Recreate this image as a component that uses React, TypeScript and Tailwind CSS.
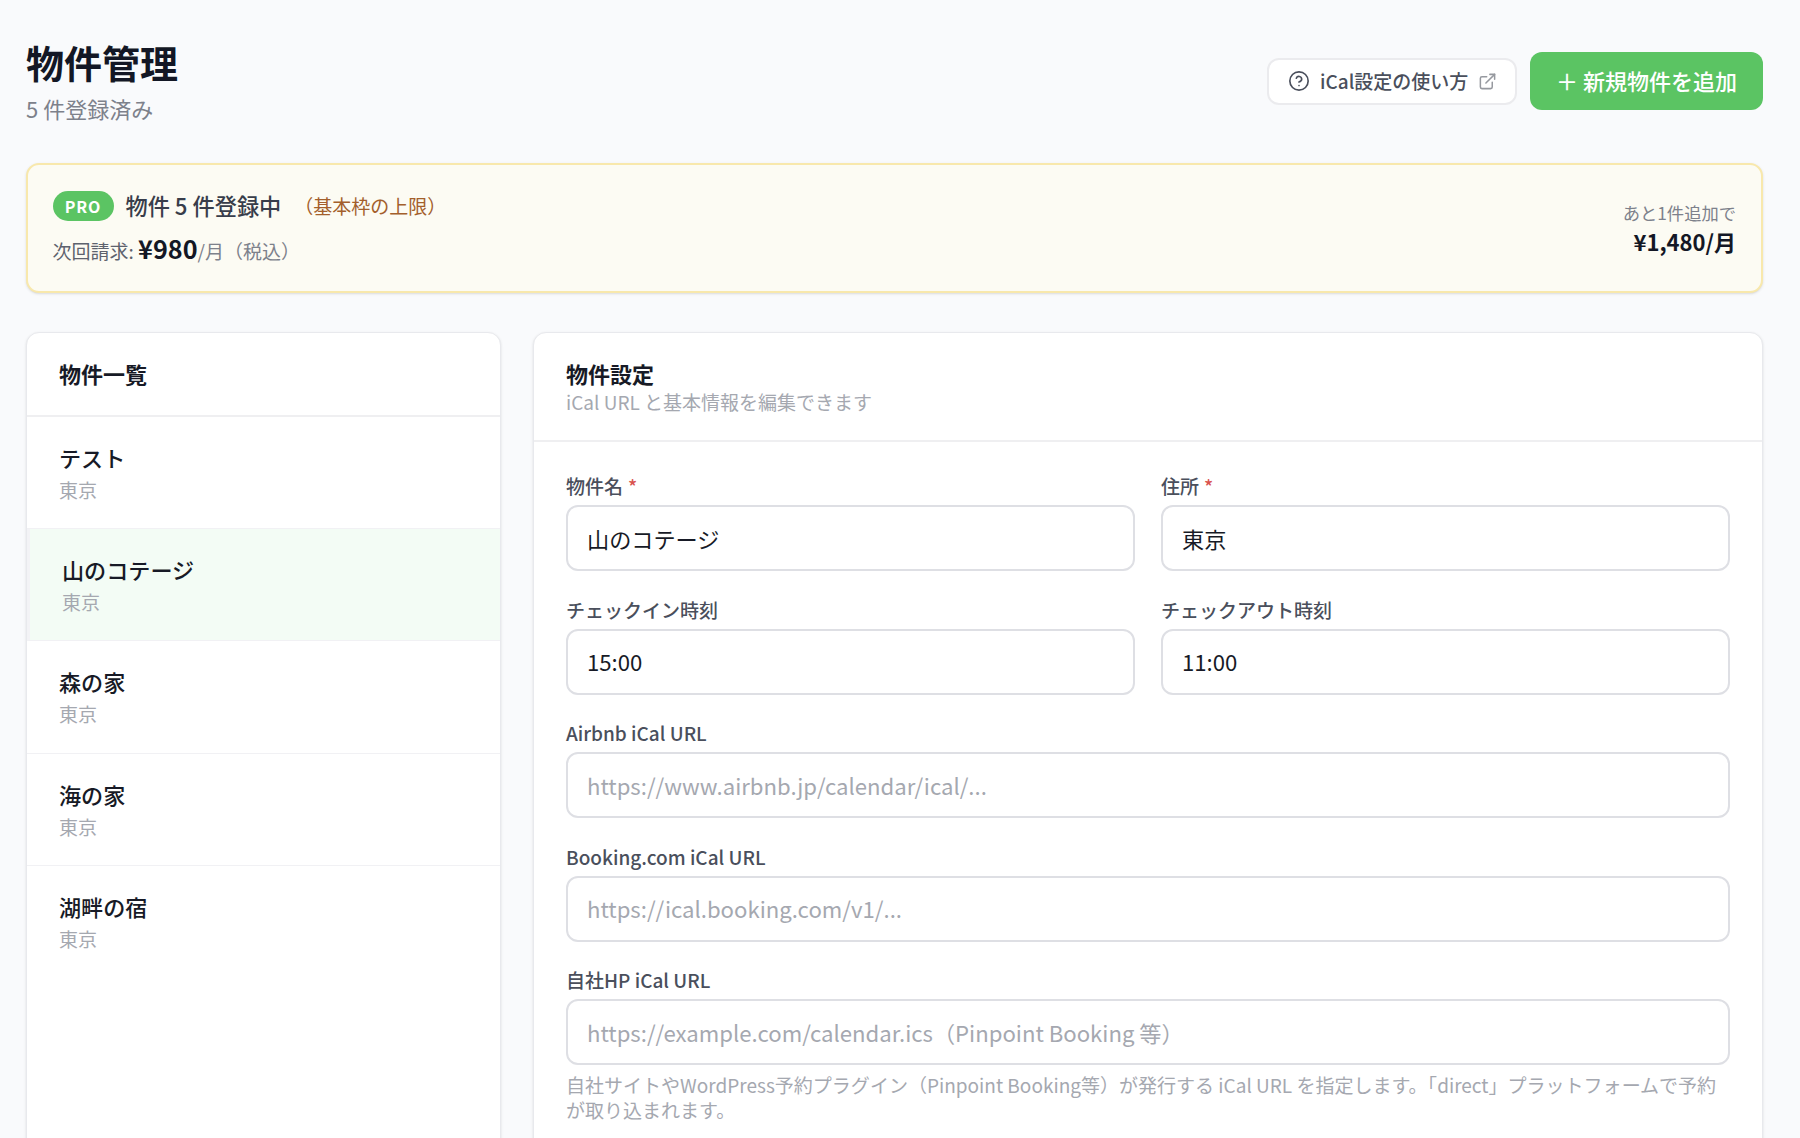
import { CircleHelp, ExternalLink } from "lucide-react";
import clsx from "clsx";

const properties = [
  { id: 1, name: "テスト", address: "東京" },
  { id: 2, name: "山のコテージ", address: "東京" },
  { id: 3, name: "森の家", address: "東京" },
  { id: 4, name: "海の家", address: "東京" },
  { id: 5, name: "湖畔の宿", address: "東京" },
];

const selectedId = 2;

type FieldProps = {
  label: string;
  value?: string;
  placeholder?: string;
  required?: boolean;
};

function Field({ label, value, placeholder, required }: FieldProps) {
  return (
    <div>
      <label className="flex h-[30px] gap-[5px] text-[19px] leading-[22px] font-medium text-[#4a4f5c]">
        {label}
        {required && <span className="text-[#d9534f]">*</span>}
      </label>
      <input
        className="block h-[66px] w-full rounded-[12px] border-2 border-[#dedfe4] bg-white px-[19px] pb-px text-[22.15px] text-[#171a26] placeholder:text-[#a5a8b0]"
        defaultValue={value}
        placeholder={placeholder}
      />
    </div>
  );
}

export default function App() {
  return (
    <div className="h-[1138px] overflow-hidden bg-[#f9fafc] pt-[37px] pr-[37px] pl-[26px] font-['Noto_Sans_CJK_JP',sans-serif]">
      <header className="flex h-[126px] justify-between">
        <div>
          <h1 className="text-[38px] leading-[50px] font-bold text-[#131725]">
            物件管理
          </h1>
          <p className="text-[22px] leading-[43px] text-[#7d818b]">
            5 件登録済み
          </p>
        </div>
        <div className="mt-[15px] flex h-[58px] items-center gap-[13px] self-start">
          <button className="flex h-[47px] w-[250px] items-center rounded-[12px] border-2 border-[#ebebee] bg-white pl-[19px] text-[19px] font-medium text-[#4a4f5c]">
            <CircleHelp size={22} strokeWidth={1.8} />
            <span className="ml-[10px]">iCal設定の使い方</span>
            <ExternalLink
              size={19}
              strokeWidth={1.9}
              className="ml-[10px] text-[#96999f]"
            />
          </button>
          <button className="h-[58px] w-[233px] rounded-[12px] bg-[#5bc463] pb-[2px] text-[22px] font-medium text-white">
            ＋ 新規物件を追加
          </button>
        </div>
      </header>

      <section className="flex h-[130px] items-center justify-between rounded-[13px] border-2 border-[#f8e8ac] bg-[#fcfbf3] pr-[25px] pl-[24.5px] shadow-sm">
        <div className="pt-px">
          <div className="flex h-[40px] items-center">
            <span className="flex h-[30px] w-[61px] items-center justify-center rounded-full bg-[#5bc463] text-[16px] font-bold tracking-[0.8px] text-white">
              PRO
            </span>
            <span className="ml-[12px] pt-px text-[22.2px] font-medium text-[#383d4a]">
              物件 5 件登録中
            </span>
            <span className="ml-[13px] pt-[2px] text-[19px] text-[#a35f2c]">
              （基本枠の上限）
            </span>
          </div>
          <p className="h-[46px] text-[19px] leading-[45px] text-[#5d626d]">
            次回請求:{" "}
            <span className="text-[25.2px] font-bold text-[#131725]">¥980</span>
            <span className="text-[#7d818b]">/月（税込）</span>
          </p>
        </div>
        <div className="pb-[2px] text-right">
          <p className="text-[17.3px] leading-[29px] text-[#7d818b]">
            あと1件追加で
          </p>
          <p className="text-[22px] leading-[29px] font-bold text-[#131725]">
            ¥1,480/月
          </p>
        </div>
      </section>

      <div className="mt-[39px] grid grid-cols-[475px_1fr] gap-[32px]">
        <section className="h-[860px] overflow-hidden rounded-[13px] border-[1.5px] border-[#e8e9ed] bg-white shadow-sm">
          <h2 className="h-[83.5px] border-b-2 border-[#efeff1] pl-[32px] text-[22px] leading-[80px] font-bold text-[#171a26]">
            物件一覧
          </h2>
          <ul>
            {properties.map((p) => (
              <li
                key={p.id}
                className={clsx(
                  "h-[112.4px] pt-[23.2px]",
                  p.id !== 5 && "border-b-[1.5px] border-[#f1f1f4]",
                  p.id === selectedId
                    ? "border-l-[3px] border-l-[#f3f3f6] bg-[#f3fcf5] pl-[32px]"
                    : "pl-[32px]"
                )}
              >
                <p className="text-[22.1px] leading-[34px] font-medium text-[#171a26]">
                  {p.name}
                </p>
                <p className="text-[19px] leading-[31px] text-[#a5a8b0]">
                  {p.address}
                </p>
              </li>
            ))}
          </ul>
        </section>

        <section className="h-[860px] rounded-[13px] border-[1.5px] border-[#e8e9ed] bg-white shadow-sm">
          <div className="h-[109px] border-b-2 border-[#efeff1] px-[32px] pt-[24px]">
            <h2 className="text-[22px] leading-[32px] font-bold text-[#171a26]">
              物件設定
            </h2>
            <p className="text-[19px] leading-[26px] text-[#a5a8b0]">
              iCal URL と基本情報を編集できます
            </p>
          </div>
          <form className="grid grid-cols-2 gap-x-[26px] gap-y-[27.6px] px-[32px] pt-[33px]">
            <Field label="物件名" value="山のコテージ" required />
            <Field label="住所" value="東京" required />
            <Field label="チェックイン時刻" value="15:00" />
            <Field label="チェックアウト時刻" value="11:00" />
            <div className="col-span-2">
              <Field
                label="Airbnb iCal URL"
                placeholder="https://www.airbnb.jp/calendar/ical/..."
              />
            </div>
            <div className="col-span-2">
              <Field
                label="Booking.com iCal URL"
                placeholder="https://ical.booking.com/v1/..."
              />
            </div>
            <div className="col-span-2">
              <Field
                label="自社HP iCal URL"
                placeholder="https://example.com/calendar.ics（Pinpoint Booking 等）"
              />
              <p className="mt-[7px] text-[19.02px] leading-[25px] text-[#a5a8b0]">
                自社サイトやWordPress予約プラグイン（Pinpoint
                Booking等）が発行する iCal URL
                を指定します。「direct」プラットフォームで予約が取り込まれます。
              </p>
            </div>
          </form>
        </section>
      </div>
    </div>
  );
}
